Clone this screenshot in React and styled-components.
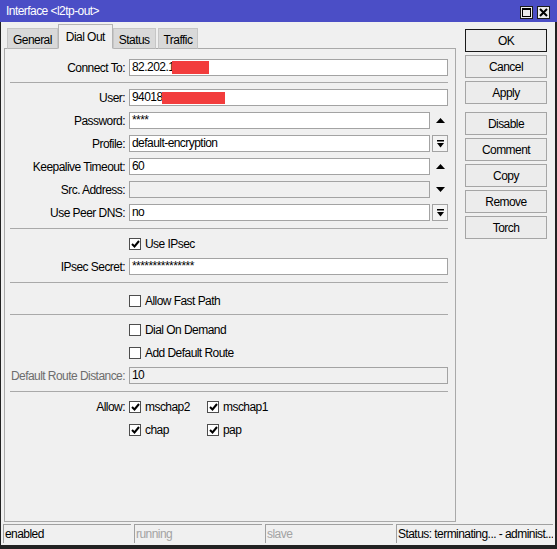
import React from 'react';
import styled, { createGlobalStyle } from 'styled-components';

const Global = createGlobalStyle`
  html, body { margin: 0; padding: 0; background: #f0f0f0; }
  body {
    font-family: "Liberation Sans", Arial, sans-serif;
    font-size: 12px;
    letter-spacing: -0.55px;
    color: #000;
  }
  * { box-sizing: border-box; }
`;

const Window = styled.div`
  width: 557px;
  height: 549px;
  display: flex;
  flex-direction: column;
  background: #f0f0f0;
`;

const TitleBar = styled.div`
  height: 22px;
  flex: none;
  background: #4b4ec6;
  color: #fff;
  display: flex;
  align-items: center;
  justify-content: space-between;
  padding: 0 7px 0 6px;
`;

const TitleText = styled.span`
  font-size: 12px;
`;

const TitleControls = styled.div`
  display: flex;
  gap: 4px;
  margin-top: 2px;
`;

const TitleButton = styled.div`
  width: 13px;
  height: 13px;
  background: #ececec;
  border: 1px solid #1c1c1c;
  display: flex;
  align-items: center;
  justify-content: center;
`;

const Frame = styled.div`
  flex: 1;
  display: flex;
  flex-direction: column;
  border-left: 1px solid #222;
  border-right: 2px solid #222;
  border-bottom: 4px solid #222;
`;

const Main = styled.div`
  flex: 1;
  display: flex;
`;

const LeftPane = styled.div`
  width: 455px;
  padding-left: 3px;
  display: flex;
  flex-direction: column;
`;

const TabStrip = styled.div`
  height: 27px;
  display: flex;
  align-items: flex-end;
  padding-left: 2px;
  margin-bottom: -1px;
  position: relative;
  z-index: 1;
`;

const Tab = styled.div`
  height: ${p => (p.$active ? 25 : 21)}px;
  padding: 0 ${p => (p.$active ? 7 : 5)}px;
  margin: 0 ${p => (p.$active ? -1 : 1)}px;
  display: flex;
  align-items: center;
  padding-top: ${p => (p.$active ? 0 : 2)}px;
  background: ${p => (p.$active ? '#f0f0f0' : '#d9d9d9')};
  border: 1px solid ${p => (p.$active ? '#b4b4b4' : '#c6c6c6')};
  border-bottom: ${p => (p.$active ? '1px solid #f0f0f0' : '1px solid #b4b4b4')};
`;

const Panel = styled.div`
  flex: 1;
  border: 1px solid #a9a9a9;
  padding-top: 10px;
  display: flex;
  flex-direction: column;
`;

const Row = styled.div`
  display: flex;
  align-items: center;
  height: 17px;
  padding-right: 7px;
  margin-top: ${p => p.$mt ?? 6}px;
  flex: none;
  &:first-child { margin-top: 0; }
`;

const Label = styled.div`
  width: 120px;
  margin-right: 4px;
  flex: none;
  text-align: right;
  white-space: nowrap;
  color: ${p => (p.$disabled ? '#6d6d6d' : '#000')};
`;

const Field = styled.div`
  flex: 1;
  height: 17px;
  border: 1px solid #a3a3a3;
  background: ${p => (p.$disabled ? '#f0f0f0' : '#fff')};
  padding-left: 2px;
  line-height: 15px;
  white-space: nowrap;
  overflow: hidden;
  display: flex;
  align-items: center;
`;

const Redact = styled.span`
  display: inline-block;
  width: ${p => p.$w}px;
  height: ${p => p.$h}px;
  background: #f23c3c;
  margin-left: ${p => p.$ml ?? 0}px;
`;

const ArrowSlot = styled.div`
  width: 16px;
  height: 17px;
  margin-left: 2px;
  flex: none;
  display: flex;
  align-items: center;
  justify-content: center;
  border: ${p => (p.$boxed ? '1px solid #a3a3a3' : 'none')};
  background: ${p => (p.$boxed ? '#f4f4f4' : 'transparent')};
`;

const Sep = styled.div`
  height: 1px;
  flex: none;
  background: #a9a9a9;
  margin: ${p => p.$mt ?? 7}px 7px 0 5px;
`;

const Check = styled.div`
  width: 12px;
  height: 12px;
  flex: none;
  border: 1px solid #4d4d4d;
  background: #fff;
  display: flex;
  align-items: center;
  justify-content: center;
`;

const CheckItem = styled.div`
  display: flex;
  align-items: center;
  gap: 4px;
  width: ${p => (p.$w ? `${p.$w}px` : 'auto')};
  white-space: nowrap;
`;

const Spacer = styled.div`
  width: 124px;
  flex: none;
`;

const RightPane = styled.div`
  padding: 7px 0 0 9px;
  display: flex;
  flex-direction: column;
`;

const Button = styled.div`
  width: 82px;
  height: 23px;
  margin-top: ${p => p.$mt ?? 3}px;
  border: 1px solid ${p => (p.$default ? '#1a1a1a' : '#a5a5a5')};
  background: #ececec;
  display: flex;
  align-items: center;
  justify-content: center;
  &:first-child { margin-top: 0; }
`;

const StatusBar = styled.div`
  height: 23px;
  flex: none;
  display: flex;
  gap: 3px;
  padding: 2px 2px 2px 2px;
`;

const StatusField = styled.div`
  width: ${p => (p.$w ? `${p.$w}px` : 'auto')};
  flex: ${p => (p.$w ? 'none' : 1)};
  border-top: 1px solid #a0a0a0;
  border-left: 1px solid #a0a0a0;
  padding-left: 1px;
  line-height: 18px;
  white-space: nowrap;
  overflow: hidden;
  color: ${p => (p.$dim ? '#a3a3a3' : '#000')};
`;

const Up = () => (
  <svg width="9" height="5" viewBox="0 0 9 5"><polygon points="0,5 4.5,0 9,5" fill="#000" /></svg>
);
const Down = () => (
  <svg width="9" height="5" viewBox="0 0 9 5"><polygon points="0,0 9,0 4.5,5" fill="#000" /></svg>
);
const BarDown = () => (
  <svg width="7" height="8" viewBox="0 0 7 8">
    <rect x="0" y="0" width="7" height="1.5" fill="#000" />
    <polygon points="0,3 7,3 3.5,7.5" fill="#000" />
  </svg>
);
const Tick = () => (
  <svg width="9" height="8" viewBox="0 0 9 8">
    <polyline points="1,4 3.5,6.5 8,1" fill="none" stroke="#000" strokeWidth="2" />
  </svg>
);

const CheckBox = ({ checked, label, w }) => (
  <CheckItem $w={w}>
    <Check>{checked && <Tick />}</Check>
    <span>{label}</span>
  </CheckItem>
);

export default function App() {
  return (
    <Window>
      <Global />
      <TitleBar>
        <TitleText>Interface &lt;l2tp-out&gt;</TitleText>
        <TitleControls>
          <TitleButton>
            <svg width="9" height="9" viewBox="0 0 9 9">
              <rect x="0.5" y="0.5" width="8" height="8" fill="none" stroke="#000" />
              <rect x="0" y="0" width="9" height="2" fill="#000" />
            </svg>
          </TitleButton>
          <TitleButton>
            <svg width="9" height="9" viewBox="0 0 9 9">
              <path d="M1 1 L8 8 M8 1 L1 8" stroke="#000" strokeWidth="2" />
            </svg>
          </TitleButton>
        </TitleControls>
      </TitleBar>
      <Frame>
        <Main>
          <LeftPane>
            <TabStrip>
              <Tab>General</Tab>
              <Tab $active>Dial Out</Tab>
              <Tab>Status</Tab>
              <Tab>Traffic</Tab>
            </TabStrip>
            <Panel>
              <Row>
                <Label>Connect To:</Label>
                <Field>82.202.1<Redact $w={37} $h={13} $ml={-2} /></Field>
              </Row>
              <Sep $mt={6} />
              <Row>
                <Label>User:</Label>
                <Field>94018<Redact $w={63} $h={12} $ml={-1} /></Field>
              </Row>
              <Row>
                <Label>Password:</Label>
                <Field>****</Field>
                <ArrowSlot><Up /></ArrowSlot>
              </Row>
              <Row>
                <Label>Profile:</Label>
                <Field>default-encryption</Field>
                <ArrowSlot $boxed><BarDown /></ArrowSlot>
              </Row>
              <Row>
                <Label>Keepalive Timeout:</Label>
                <Field>60</Field>
                <ArrowSlot><Up /></ArrowSlot>
              </Row>
              <Row>
                <Label>Src. Address:</Label>
                <Field $disabled />
                <ArrowSlot><Down /></ArrowSlot>
              </Row>
              <Row>
                <Label>Use Peer DNS:</Label>
                <Field>no</Field>
                <ArrowSlot $boxed><BarDown /></ArrowSlot>
              </Row>
              <Sep />
              <Row>
                <Spacer />
                <CheckBox checked label="Use IPsec" />
              </Row>
              <Row>
                <Label>IPsec Secret:</Label>
                <Field>***************</Field>
              </Row>
              <Sep />
              <Row $mt={9}>
                <Spacer />
                <CheckBox label="Allow Fast Path" />
              </Row>
              <Sep $mt={5} />
              <Row>
                <Spacer />
                <CheckBox label="Dial On Demand" />
              </Row>
              <Row>
                <Spacer />
                <CheckBox label="Add Default Route" />
              </Row>
              <Row>
                <Label $disabled>Default Route Distance:</Label>
                <Field $disabled>10</Field>
              </Row>
              <Sep />
              <Row>
                <Label>Allow:</Label>
                <CheckBox checked label="mschap2" w={78} />
                <CheckBox checked label="mschap1" w={78} />
              </Row>
              <Row>
                <Spacer />
                <CheckBox checked label="chap" w={78} />
                <CheckBox checked label="pap" w={78} />
              </Row>
            </Panel>
          </LeftPane>
          <RightPane>
            <Button $default>OK</Button>
            <Button>Cancel</Button>
            <Button>Apply</Button>
            <Button $mt={8}>Disable</Button>
            <Button>Comment</Button>
            <Button>Copy</Button>
            <Button>Remove</Button>
            <Button>Torch</Button>
          </RightPane>
        </Main>
        <StatusBar>
          <StatusField $w={128}>enabled</StatusField>
          <StatusField $w={128} $dim>running</StatusField>
          <StatusField $w={128} $dim>slave</StatusField>
          <StatusField>Status: terminating... - administ...</StatusField>
        </StatusBar>
      </Frame>
    </Window>
  );
}
